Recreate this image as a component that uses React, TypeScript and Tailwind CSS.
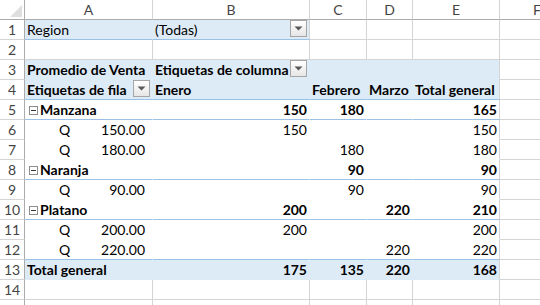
import React from "react";

const FILL = "bg-[#ddebf7]";

type Cell = {
  text?: React.ReactNode;
  align?: "left" | "right";
};

const DropButton = () => (
  <span className="ml-auto mb-[2px] flex h-[17px] w-[17px] shrink-0 items-center justify-center border border-[#a6a6a6] bg-gradient-to-b from-white to-[#e6e6e6]">
    <svg width="9" height="5" viewBox="0 0 9 5">
      <path d="M0.5 0.5h8L4.5 4.5z" fill="#595959" />
    </svg>
  </span>
);

const Collapse = () => (
  <span className="mr-[2px] ml-[2px] mb-[4px] flex h-[9px] w-[9px] shrink-0 items-center justify-center border border-[#8c8c8c] bg-white">
    <span className="h-px w-[5px] bg-[#333]" />
  </span>
);

const base =
  "box-border flex h-5 shrink-0 items-end overflow-visible whitespace-nowrap border-r border-b px-[2px] leading-[18px]";

const widths = ["w-[128px]", "w-[157px]", "w-[57px]", "w-[46px]", "w-[87px]"];

function RowNum({ n }: { n?: number }) {
  return (
    <div className="box-border flex h-5 w-[25px] shrink-0 items-end justify-center border-r border-b border-r-[#ababab] border-b-[#d4d4d4] leading-[18px] text-[#444]">
      {n}
    </div>
  );
}

function Tail() {
  return <div className={`${base} w-[80px] border-[#d4d4d4]`} />;
}

// a plain worksheet row with only gridlines
function EmptyRow({ n }: { n?: number }) {
  return (
    <div className="flex">
      <RowNum n={n} />
      {widths.map((w) => (
        <div key={w} className={`${base} ${w} border-[#d4d4d4]`} />
      ))}
      <Tail />
    </div>
  );
}

// one row of the pivot body, columns A..E
function PivotRow({
  n,
  cells,
  fill,
  line,
  bold,
}: {
  n: number;
  cells: Cell[];
  fill?: boolean;
  line?: boolean;
  bold?: boolean;
}) {
  const bottom = line ? "border-b-[#9bc2e6]" : fill ? "border-b-[#ddebf7]" : "border-b-white";
  return (
    <div className="flex">
      <RowNum n={n} />
      {cells.map((c, i) => (
        <div
          key={i}
          className={`${base} ${widths[i]} ${fill ? FILL : "bg-white"} ${bottom} ${
            i === 4 ? "border-r-[#d4d4d4]" : "border-r-transparent"
          } ${c.align === "right" ? "justify-end" : "justify-start"} ${bold ? "font-bold" : ""}`}
        >
          {c.text}
        </div>
      ))}
      <Tail />
    </div>
  );
}

const R = (t: string): Cell => ({ text: t, align: "right" });
const E: Cell = {};

const group = (label: string): Cell => ({
  text: (
    <>
      <Collapse />
      {label}
    </>
  ),
});

const item = (amount: string): Cell => ({
  text: (
    <span className="flex w-full justify-between pl-[32px] pr-[5px]">
      <span>Q</span>
      <span>{amount}</span>
    </span>
  ),
});

export default function App() {
  const letters = ["A", "B", "C", "D", "E"];
  return (
    <div
      className="h-[305px] w-[540px] overflow-hidden bg-white text-[14px] text-black"
      style={{ fontFamily: "Lato, 'Open Sans', sans-serif" }}
    >
      {/* column headers */}
      <div className="flex">
        <div className="relative box-border h-5 w-[25px] shrink-0 border-r border-b border-[#ababab]">
          <svg className="absolute right-[2px] bottom-[2px]" width="12" height="12" viewBox="0 0 12 12">
            <path d="M12 0V12H0z" fill="#dfdfdf" />
          </svg>
        </div>
        {letters.map((l, i) => (
          <div
            key={l}
            className={`box-border flex h-5 shrink-0 items-end justify-center border-r border-b border-r-[#d4d4d4] border-b-[#ababab] leading-[18px] text-[#444] ${widths[i]}`}
          >
            {l}
          </div>
        ))}
        <div className="box-border flex h-5 w-[80px] shrink-0 items-end border-b border-b-[#ababab] pl-[33px] leading-[18px] text-[#444]">
          F
        </div>
      </div>

      {/* report filter */}
      <div className="flex">
        <RowNum n={1} />
        <div className={`${base} ${widths[0]} ${FILL} border-r-transparent border-b-[#9bc2e6]`}>Region</div>
        <div className={`${base} ${widths[1]} ${FILL} border-r-[#d4d4d4] border-b-[#9bc2e6]`}>
          (Todas)
          <DropButton />
        </div>
        {widths.slice(2).map((w) => (
          <div key={w} className={`${base} ${w} border-[#d4d4d4]`} />
        ))}
        <Tail />
      </div>

      <EmptyRow n={2} />

      <div className="flex">
        <RowNum n={3} />
        <div className={`${base} ${widths[0]} ${FILL} border-r-transparent border-b-[#ddebf7] font-bold`}>
          Promedio de Venta
        </div>
        <div className={`${base} ${widths[1]} ${FILL} border-r-transparent border-b-[#ddebf7] font-bold`}>
          Etiquetas de columna
          <DropButton />
        </div>
        <div className={`${base} ${widths[2]} ${FILL} border-r-transparent border-b-[#ddebf7]`} />
        <div className={`${base} ${widths[3]} ${FILL} border-r-transparent border-b-[#ddebf7]`} />
        <div className={`${base} ${widths[4]} ${FILL} border-r-[#d4d4d4] border-b-[#ddebf7]`} />
        <Tail />
      </div>

      <div className="flex">
        <RowNum n={4} />
        <div className={`${base} ${widths[0]} ${FILL} border-r-transparent border-b-[#9bc2e6] font-bold`}>
          Etiquetas de fila
          <DropButton />
        </div>
        {["Enero", "Febrero", "Marzo", "Total general"].map((t, i) => (
          <div
            key={t}
            className={`${base} ${widths[i + 1]} ${FILL} ${
              i === 3 ? "border-r-[#d4d4d4]" : "border-r-transparent"
            } border-b-[#9bc2e6] font-bold`}
          >
            {t}
          </div>
        ))}
        <Tail />
      </div>

      <PivotRow n={5} bold line cells={[group("Manzana"), R("150"), R("180"), E, R("165")]} />
      <PivotRow n={6} cells={[item("150.00"), R("150"), E, E, R("150")]} />
      <PivotRow n={7} cells={[item("180.00"), E, R("180"), E, R("180")]} />
      <PivotRow n={8} bold line cells={[group("Naranja"), E, R("90"), E, R("90")]} />
      <PivotRow n={9} cells={[item("90.00"), E, R("90"), E, R("90")]} />
      <PivotRow n={10} bold line cells={[group("Platano"), R("200"), E, R("220"), R("210")]} />
      <PivotRow n={11} cells={[item("200.00"), R("200"), E, E, R("200")]} />
      <PivotRow n={12} line cells={[item("220.00"), E, E, R("220"), R("220")]} />
      <PivotRow
        n={13}
        bold
        fill
        cells={[{ text: "Total general" }, R("175"), R("135"), R("220"), R("168")]}
      />

      <EmptyRow n={14} />
      {/* next row only peeks in under the bottom edge */}
      <EmptyRow />
    </div>
  );
}
